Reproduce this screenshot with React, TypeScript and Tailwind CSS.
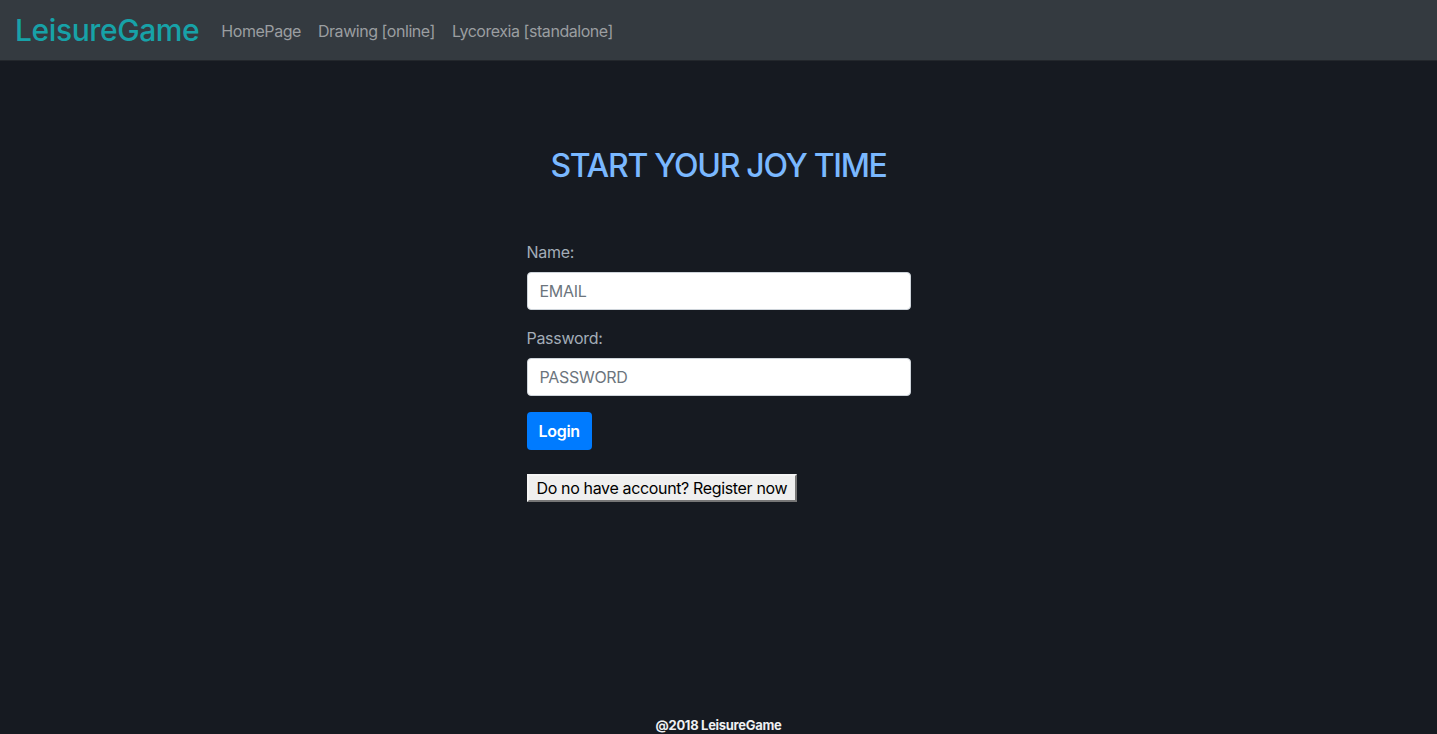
export default function App() {
  return (
    <div
      className="min-h-[734px] flex flex-col bg-[#161a21]"
      style={{ fontFamily: "Inter, 'Noto Sans', 'Liberation Sans', sans-serif" }}
    >
      <nav className="h-[61px] bg-[#343a40] flex items-center px-4 border-b border-[#23272c]">
        <a href="#" className="text-[#17a2a8] text-[30px] font-medium mr-[22px] -ml-[1px] tracking-[-0.4px]">
          LeisureGame
        </a>
        <div className="flex items-center gap-[17px] text-[16px] text-[#9b9ea1] mt-[1px] tracking-[-0.45px]">
          <a href="#">HomePage</a>
          <a href="#">Drawing [online]</a>
          <a href="#">Lycorexia [standalone]</a>
        </div>
      </nav>

      <main className="flex-1 flex flex-col items-center">
        <h2 className="mt-[86px] text-[32px] font-medium text-[#7ab8ff] leading-[38px] tracking-[-1.3px]">
          START YOUR JOY TIME
        </h2>

        <form className="mt-[55px] w-[384px] flex flex-col" onSubmit={(e) => e.preventDefault()}>
          <label className="text-[16px] text-[#a3adb8] leading-6 tracking-[-0.3px]">Name:</label>
          <input
            className="mt-[8px] h-[38px] rounded-[4px] bg-white border border-[#ced4da] px-3 text-[16px] tracking-[-0.3px] placeholder:text-[#6c757d]"
            placeholder="EMAIL"
          />
          <label className="mt-[16px] text-[16px] text-[#a3adb8] leading-6 tracking-[-0.3px]">Password:</label>
          <input
            type="password"
            className="mt-[8px] h-[38px] rounded-[4px] bg-white border border-[#ced4da] px-3 text-[16px] tracking-[-0.3px] placeholder:text-[#6c757d]"
            placeholder="PASSWORD"
          />
          <div className="mt-[16px]">
            <button className="h-[38px] px-3 rounded-[4px] bg-[#007bff] text-white text-[16px] font-semibold tracking-[-0.3px]">
              Login
            </button>
          </div>
          <div className="mt-[24px]">
            <button
              type="button"
              className="h-[28px] px-[8px] bg-[#efefef] text-black text-[16px] tracking-[-0.35px] border-2 border-t-[#f5f5f5] border-l-[#f5f5f5] border-r-[#767676] border-b-[#767676]"
            >
              Do no have account? Register now
            </button>
          </div>
        </form>
      </main>

      <footer className="h-[20px] pt-[3px] flex justify-center items-start text-[13px] leading-[17px] font-bold text-[#eef0f2] tracking-[-0.3px]">
        @2018 LeisureGame
      </footer>
    </div>
  );
}
